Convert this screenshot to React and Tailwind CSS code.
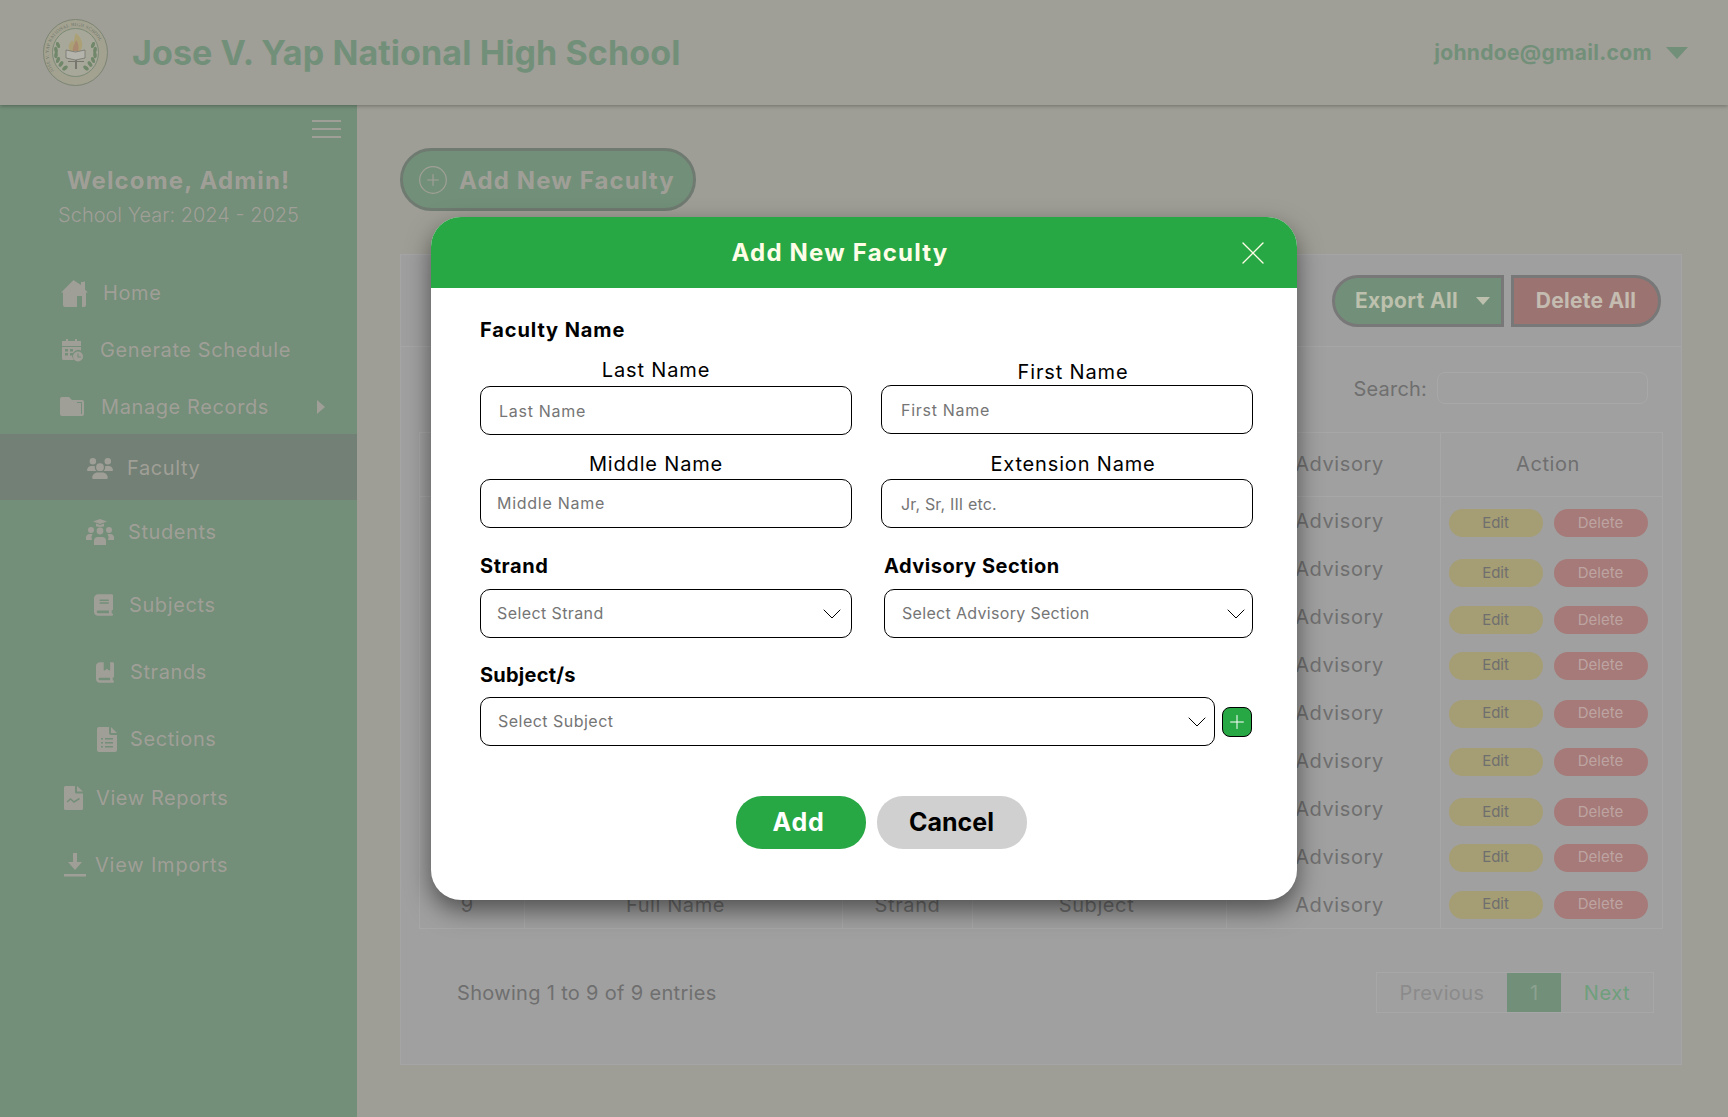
import React from 'react'
import { ChevronDown, CirclePlus, Plus, X } from 'lucide-react'
import { FaUsers, FaBook, FaBookBookmark } from 'react-icons/fa6'

const leaves = [
  [15, 26, -20], [13, 31, -8], [13, 36, 5], [15, 41, 20], [18, 45, 35], [22, 49, 50],
  [50, 26, 20], [52, 31, 8], [52, 36, -5], [50, 41, -20], [47, 45, -35], [43, 49, -50],
]

const SchoolLogo = () => (
  <svg viewBox="0 0 65 67" className="w-[65px] h-[67px]">
    <defs>
      <path id="sealArc" d="M11 52 A27 28 0 1 1 54 52" />
    </defs>
    <ellipse cx="32.5" cy="33.5" rx="32" ry="33" fill="#a3a291" stroke="#7c8573" strokeWidth="1" />
    <text fontSize="4.6" fill="#6b7468" fontFamily="Liberation Serif, serif" letterSpacing="0.3">
      <textPath href="#sealArc">JOSE V. YAP NATIONAL HIGH SCHOOL</textPath>
    </text>
    <ellipse cx="32.5" cy="33.5" rx="23" ry="24" fill="#a8a89a" stroke="#7b8a75" strokeWidth="1" />
    {leaves.map(([x, y, r]) => (
      <ellipse key={`${x}-${y}`} cx={x} cy={y} rx="1.800" ry="3.200" fill="#71876a" transform={`rotate(${r} ${x} ${y})`} />
    ))}
    <path d="M33 14 C40 20 41 28 37 32 L27 32 C24 27 27 24 29 21 C30 23 31 23 31 22 C31 19 32 16 33 14Z" fill="#aca176" />
    <path d="M33 21 C36 25 36 29 35 32 L30 32 C29 28 32 25 33 21Z" fill="#a98a70" />
    <path d="M23 31 L32.5 33 L42 31 L42 39 L32.5 41 L23 39Z" fill="#b4b4ac" stroke="#6d6d66" strokeWidth="0.7" />
    <path d="M32 41 H34 V50 H32Z M25 42 H41 V43 H25Z" fill="#77766f" />
  </svg>
)

const HomeIcon = () => (
  <svg viewBox="0 0 27 27" className="w-[27px] h-[27px]" fill="currentColor">
    <path d="M12.500 0L0 12.500h2V25a2 2 0 0 0 2 2h12V16h5v11h2a2 2 0 0 0 2-2V12.500h2L24 9.500V1.500h-1.500V2H20v3z" />
  </svg>
)

const ScheduleIcon = () => (
  <svg viewBox="0 0 21 23" className="w-[21px] h-[23px]" fill="currentColor">
    <path d="M4 0h2v3H4zM13 0h2v3h-2zM0 2h19v5H0zM0 8h19v3.500a6 6 0 0 0-7 9.500H1.500A1.500 1.500 0 0 1 0 19.500z" />
    <path d="M3 10h3v2.500H3zM8 10h3v2.500H8zM3 14h3v2.500H3zM8 14h3v2.500H8z" fill="#738e79" />
    <circle cx="16" cy="17.500" r="5" />
    <path d="M15.500 14.500h1v3h2.500v1h-3.500z" fill="#738e79" />
  </svg>
)

const FolderIcon = () => (
  <svg viewBox="0 0 24 19" className="w-[24px] h-[19px]" fill="currentColor">
    <path d="M2 0h7l3 3h10a2 2 0 0 1 2 2v12a2 2 0 0 1-2 2H2a2 2 0 0 1-2-2V2a2 2 0 0 1 2-2z" />
    <path d="M17 5h4.500a.5.500 0 0 1 .5.500V17h-1V6h-4z" fill="#738e79" />
  </svg>
)

const StudentsIcon = () => (
  <svg viewBox="0 0 28 26" className="w-[28px] h-[26px]" fill="currentColor">
    <path d="M14 0l7 2.500L14 5 7 2.500z" />
    <path d="M10 4.500v2.500c0 1.200 8 1.200 8 0V4.500l-4 1.500z" />
    <circle cx="14" cy="12" r="3.400" />
    <path d="M8 26v-4a4 4 0 0 1 4-4h4a4 4 0 0 1 4 4v4z" />
    <circle cx="5" cy="11" r="3" />
    <path d="M0 21v-3a4 4 0 0 1 4-3h2.500a6 6 0 0 0-.500 6z" />
    <circle cx="23" cy="11" r="3" />
    <path d="M28 21v-3a4 4 0 0 0-4-3h-2.500a6 6 0 0 1 .500 6z" />
  </svg>
)

const ListFileIcon = () => (
  <svg viewBox="0 0 20 25" className="w-[20px] h-[25px]" fill="currentColor">
    <path d="M2 0h10v6a2 2 0 0 0 2 2h6v15a2 2 0 0 1-2 2H2a2 2 0 0 1-2-2V2a2 2 0 0 1 2-2z" />
    <path d="M14 0l6 6h-6z" />
    <path d="M4 11h2v1.500H4zM8 11h8v1.500H8zM4 15h2v1.500H4zM8 15h8v1.500H8zM4 19h2v1.500H4zM8 19h8v1.500H8z" fill="#738e79" />
  </svg>
)

const ReportIcon = () => (
  <svg viewBox="0 0 19 24" className="w-[19px] h-[24px]" fill="currentColor">
    <path d="M1.500 0H11v6a1.500 1.500 0 0 0 1.500 1.500H19v15a1.500 1.500 0 0 1-1.500 1.500h-16A1.500 1.500 0 0 1 0 22.500v-21A1.500 1.500 0 0 1 1.500 0z" />
    <path d="M13 0l6 5.500h-6z" />
    <path d="M3 16l3.500-3 3.500 3 5.500-3.500" fill="none" stroke="#738e79" strokeWidth="1.500" />
  </svg>
)

const ImportIcon = () => (
  <svg viewBox="0 0 22 24" className="w-[22px] h-[24px]" fill="currentColor">
    <path d="M9 0h4v9h5l-7 8-7-8h5zM0 21h22v2.500H0z" />
  </svg>
)

// buttons in the action column don't sit quite on the row centre
const rows = [
  { n: 1, pad: 'pt-[4px]' },
  { n: 2, pad: 'pt-[9px]' },
  { n: 3, pad: 'pt-[7px]' },
  { n: 4, pad: 'pt-[2px]' },
  { n: 5, pad: 'pt-[2px]' },
  { n: 6, pad: 'pt-[2px]' },
  { n: 7, pad: 'pt-[7px]' },
  { n: 8, pad: 'pt-[2px]' },
  { n: 9, pad: 'pt-0' },
]

function App() {
  return (
    <div className="relative h-[1117px] overflow-hidden bg-[#9f9e96] flex flex-col font-['Inter',sans-serif]">
      {/* Header */}
      <header className="h-[105px] shrink-0 bg-[#9f9e97] shadow-[0_1px_4px_rgba(0,0,0,0.3)] z-10 flex items-center justify-between pl-[43px] pr-[40px]">
        <div className="flex items-center gap-[24px]">
          <SchoolLogo />
          <h1 className="text-[34px] font-bold text-[#729079] tracking-[0.003em]">Jose V. Yap National High School</h1>
        </div>
        <div className="flex items-center gap-[14px] text-[#729079]">
          <span className="text-[21px] font-bold tracking-[0.016em]">johndoe@gmail.com</span>
          <span className="w-0 h-0 border-x-[11px] border-x-transparent border-t-[12px] border-t-[#729079]" />
        </div>
      </header>

      <div className="flex flex-1 min-h-0">
        {/* Sidebar */}
        <aside className="w-[357px] shrink-0 bg-[#738e79] text-[#a09f97]">
          <div className="flex justify-end pt-[15px] pr-[16px]">
            <div className="w-[29px] flex flex-col gap-[6px]">
              <div className="h-[2px] bg-[#a09f97]" />
              <div className="h-[2px] bg-[#a09f97]" />
              <div className="h-[2px] bg-[#a09f97]" />
            </div>
          </div>
          <div className="text-center mt-[26px]">
            <p className="text-[24px] font-bold leading-[34px] tracking-[0.048em]">Welcome, Admin!</p>
            <p className="text-[20px] font-light leading-[28px] mt-[3px]">School Year: 2024 - 2025</p>
          </div>

          <nav className="mt-[36px] text-[20px] tracking-[0.03em]">
            <div className="h-[56px] pl-[61px] flex items-center gap-[15px]"><HomeIcon /><span>Home</span></div>
            <div className="h-[58px] pl-[62px] flex items-center gap-[17px]"><ScheduleIcon /><span>Generate Schedule</span></div>
            <div className="h-[55px] pl-[60px] flex items-center gap-[17px] relative"><FolderIcon /><span>Manage Records</span><span className="absolute left-[317px] top-[21px] w-0 h-0 border-y-[7px] border-y-transparent border-l-[8px] border-l-[#a09f97]" /></div>
            <div className="h-[66px] pt-[2px] pl-[87px] flex items-center gap-[14px] bg-[#738075]"><FaUsers className="w-[26px] h-[21px]" /><span>Faculty</span></div>
            <div className="h-[63px] pt-[1px] pl-[86px] flex items-center gap-[14px]"><StudentsIcon /><span>Students</span></div>
            <div className="h-[64px] mt-[10px] pl-[94px] flex items-center gap-[16px]"><FaBook className="w-[19px] h-[24px]" /><span>Subjects</span></div>
            <div className="h-[64px] mt-[3px] pl-[96px] flex items-center gap-[16px]"><FaBookBookmark className="w-[18px] h-[23px]" /><span>Strands</span></div>
            <div className="h-[64px] mt-[3px] pl-[97px] flex items-center gap-[13px]"><ListFileIcon /><span>Sections</span></div>
            <div className="h-[54px] pl-[64px] flex items-center gap-[13px]"><ReportIcon /><span>View Reports</span></div>
            <div className="h-[64px] mt-[8px] pl-[64px] flex items-center gap-[9px]"><ImportIcon /><span className="tracking-[0.04em]">View Imports</span></div>
          </nav>
        </aside>

        {/* Main */}
        <main className="flex-1 pl-[43px] pr-[46px] pt-[43px] min-w-0 text-[#6f6f6f]">
          <button className="w-[296px] h-[63px] rounded-full border-[3px] border-[#6f7a70] bg-[#729079] text-[#a09f97] flex items-center pl-[14px] gap-[10px]">
            <CirclePlus className="w-[32px] h-[32px]" strokeWidth={0.9} />
            <span className="text-[24px] font-bold tracking-[0.047em] pt-[3px]">Add New Faculty</span>
          </button>

          <section className="mt-[43px] h-[811px] border border-[#a5a5a5] bg-[#a0a0a0]">
            <div className="h-[92px] border-b border-[#a6a6a6] bg-[#9f9f9f] flex items-center justify-end gap-[7px] pr-[20px]">
              <button className="w-[172px] h-[52px] rounded-l-full border-[3px] border-[#787878] bg-[#729079] text-[#bcc0ad] flex items-center pl-[20px]">
                <span className="text-[21px] font-bold tracking-[0.015em] pt-[1px]">Export All</span>
                <span className="ml-[18px] w-0 h-0 border-x-[7px] border-x-transparent border-t-[8px] border-t-[#bcc0ad]" />
              </button>
              <button className="w-[150px] h-[52px] rounded-r-full border-[3px] border-[#787878] bg-[#9b7472] text-[#c4bcb0] text-[21px] font-bold tracking-[0.012em] pt-[1px]">Delete All</button>
            </div>

            <div className="pt-[25px] px-[18px]">
              <div className="flex items-center justify-end gap-[10px] pr-[15px]">
                <span className="text-[20px] tracking-[0.01em] pt-[1px]">Search:</span>
                <div className="w-[211px] h-[32px] rounded-lg border border-[#a8a8a8]" />
              </div>

              <table className="w-[1243px] mt-[28px] border-collapse table-fixed text-[20px]">
                <colgroup>
                  <col className="w-[105px]" />
                  <col className="w-[318px]" />
                  <col className="w-[130px]" />
                  <col className="w-[254px]" />
                  <col className="w-[214px]" />
                  <col className="w-[222px]" />
                </colgroup>
                <thead>
                  <tr className="h-[64px]">
                    <th className="border border-[#a7a7a7] font-normal pb-[2px]">#</th>
                    <th className="border border-[#a7a7a7] font-normal pb-[2px]">Full Name</th>
                    <th className="border border-[#a7a7a7] font-normal pb-[2px]">Strand</th>
                    <th className="border border-[#a7a7a7] font-normal pb-[2px]">Subject</th>
                    <th className="border border-[#a7a7a7] font-normal tracking-[0.03em] pl-[12px] pb-[2px]">Advisory</th>
                    <th className="border border-[#a7a7a7] font-normal tracking-[0.03em] pr-[7px] pb-[2px]">Action</th>
                  </tr>
                </thead>
                <tbody>
                  {rows.map((row) => (
                    <tr key={row.n} className="h-[48px]">
                      <td className="border-x border-[#a7a7a7] text-center pr-[10px]">{row.n}</td>
                      <td className="border-x border-[#a7a7a7] text-center pr-[16px] tracking-[0.03em]">Full Name</td>
                      <td className="border-x border-[#a7a7a7] text-center tracking-[0.03em]">Strand</td>
                      <td className="border-x border-[#a7a7a7] text-center tracking-[0.03em] pr-[6px]">Subject</td>
                      <td className="border-x border-[#a7a7a7] text-center tracking-[0.03em] pl-[12px]">Advisory</td>
                      <td className="border-x border-[#a7a7a7]">
                        <div className={`flex justify-center gap-[11px] text-[15px] pr-[7px] ${row.pad}`}>
                          <span className="w-[94px] h-[28px] rounded-full bg-[#a59d73] text-[#6f6f6f] flex items-center justify-center">Edit</span>
                          <span className="w-[94px] h-[28px] rounded-full bg-[#a67a78] text-[#bda4a2] flex items-center justify-center">Delete</span>
                        </div>
                      </td>
                    </tr>
                  ))}
                  <tr className="h-0 border-b border-[#a7a7a7]" />
                </tbody>
              </table>

              <div className="mt-[43px] flex items-center justify-between pl-[38px] pr-[9px]">
                <span className="text-[20px] tracking-[0.016em]">Showing 1 to 9 of 9 entries</span>
                <div className="flex h-[41px] text-[20px] border border-[#a7a7a7]">
                  <span className="w-[130px] flex items-center justify-center text-[#8b8b8b] tracking-[0.02em]">Previous</span>
                  <span className="w-[54px] flex items-center justify-center bg-[#729079] text-[#8ca190]">1</span>
                  <span className="w-[92px] flex items-center justify-center text-[#6f9f7c] tracking-[0.03em]">Next</span>
                </div>
              </div>
            </div>
          </section>
        </main>
      </div>

      {/* Modal */}
      <div className="absolute inset-0 z-20 flex items-center justify-center">
        <div className="w-[866px] h-[683px] bg-white rounded-[30px] overflow-hidden shadow-[0_10px_25px_rgba(0,0,0,0.5)] text-black">
          <div className="h-[71px] bg-[#28a745] flex items-center pl-[16px] pr-[24px] text-[#fffde7]">
            <h2 className="flex-1 text-center text-[24px] font-bold tracking-[0.05em]">Add New Faculty</h2>
            <X className="w-[40px] h-[40px]" strokeWidth={0.8} />
          </div>

          <div className="pl-[49px] pr-[44px] pt-[28px]">
            <p className="text-[20px] font-bold leading-[28px] tracking-[0.045em]">Faculty Name</p>

            <div className="grid grid-cols-[372px_372px] gap-x-[29px] mt-[14px] text-[20px] leading-[24px] tracking-[0.042em]">
              <div>
                <p className="text-center pr-[20px]">Last Name</p>
                <div className="h-[49px] mt-[4px] border border-black rounded-[10px] pl-[18px] flex items-center text-[16px] text-[#757575] tracking-[0.045em]">Last Name</div>
              </div>
              <div>
                <p className="text-center pl-[12px] mt-[2px]">First Name</p>
                <div className="h-[49px] mt-[1px] border border-black rounded-[10px] pl-[19px] flex items-center text-[16px] text-[#757575] tracking-[0.045em]">First Name</div>
              </div>
            </div>

            <div className="grid grid-cols-[372px_372px] gap-x-[29px] mt-[17px] text-[20px] leading-[24px] tracking-[0.042em]">
              <div>
                <p className="text-center pr-[20px]">Middle Name</p>
                <div className="h-[49px] mt-[3px] border border-black rounded-[10px] pl-[16px] pb-[2px] flex items-center text-[16px] text-[#757575] tracking-[0.045em]">Middle Name</div>
              </div>
              <div>
                <p className="text-center pl-[12px]">Extension Name</p>
                <div className="h-[49px] mt-[3px] border border-black rounded-[10px] pl-[19px] flex items-center text-[16px] text-[#757575] tracking-[0.01em]">Jr, Sr, III etc.</div>
              </div>
            </div>

            <div className="grid grid-cols-[372px_369px] gap-x-[32px] mt-[24px]">
              <div>
                <p className="text-[20px] font-bold leading-[28px] tracking-[0.03em]">Strand</p>
                <div className="h-[49px] mt-[9px] border border-black rounded-[10px] pl-[16px] pr-[3px] flex items-center justify-between text-[16px] text-[#757575] tracking-[0.025em]">
                  <span className="pb-[2px]">Select Strand</span>
                  <ChevronDown className="w-[32px] h-[32px] text-black" strokeWidth={0.75} />
                </div>
              </div>
              <div>
                <p className="text-[20px] font-bold leading-[28px] tracking-[0.025em]">Advisory Section</p>
                <div className="h-[49px] mt-[9px] border border-black rounded-[10px] pl-[17px] pr-0 flex items-center justify-between text-[16px] text-[#757575] tracking-[0.02em]">
                  <span className="pb-[2px]">Select Advisory Section</span>
                  <ChevronDown className="w-[32px] h-[32px] text-black" strokeWidth={0.75} />
                </div>
              </div>
            </div>

            <p className="text-[20px] font-bold leading-[28px] mt-[23px] tracking-[0.012em]">Subject/s</p>
            <div className="flex items-center gap-[7px] mt-[8px]">
              <div className="w-[735px] h-[49px] border border-black rounded-[10px] pl-[17px] pr-px flex items-center justify-between text-[16px] text-[#757575] tracking-[0.03em]">
                <span className="pb-[1px]">Select Subject</span>
                <ChevronDown className="w-[32px] h-[32px] text-black" strokeWidth={0.75} />
              </div>
              <button className="w-[30px] h-[30px] rounded-[8px] border border-black bg-[#28a745] text-white flex items-center justify-center">
                <Plus className="w-[22px] h-[22px]" strokeWidth={1.1} />
              </button>
            </div>

            <div className="flex justify-center gap-[11px] mt-[50px] pl-[29px]">
              <button className="w-[130px] h-[53px] rounded-[26px] bg-[#28a745] text-white text-[25px] font-bold tracking-[0.03em] pr-[4px]">Add</button>
              <button className="w-[150px] h-[53px] rounded-[26px] bg-[#d0d0d0] text-black text-[25px] font-bold">Cancel</button>
            </div>
          </div>
        </div>
      </div>
    </div>
  )
}

export default App
